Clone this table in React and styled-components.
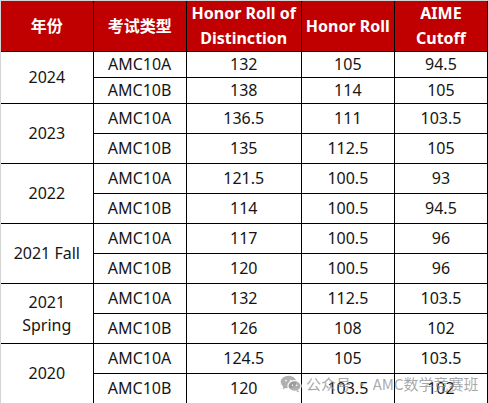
import React from "react";
import styled, { createGlobalStyle } from "styled-components";

const Global = createGlobalStyle`
  html, body { margin: 0; padding: 0; background: #fff; }
  body { font-family: "Noto Sans", "Open Sans", "Noto Sans CJK SC", sans-serif; }
`;

const Frame = styled.div`
  position: relative;
  width: 487px;
  border-left: 1px solid #d4d4d4;
  border-top: 1px solid #d4d4d4;
`;

const Table = styled.table`
  border-collapse: collapse;
  table-layout: fixed;
  width: 487px;
  font-size: 16px;
  color: #151515;
`;

const HeadRow = styled.tr`
  height: 49px;
  background: #c00000;
`;

const Th = styled.th`
  border: 1px solid #000;
  border-top: none;
  ${(p) => (p.$first ? "border-left: none;" : "")}
  color: #fff;
  font-weight: 700;
  line-height: 25px;
  padding: 0 2px;
  text-align: center;
  vertical-align: middle;
  font-family: "Noto Sans", "Open Sans", "Noto Sans CJK SC", sans-serif;
`;

const Row = styled.tr`
  height: ${(p) => p.$h}px;
`;

const Td = styled.td`
  border: 1px solid #000;
  ${(p) => (p.$first ? "border-left: none;" : "")}
  text-align: center;
  vertical-align: middle;
  padding: 0;
  line-height: 23px;
  font-weight: 400;
`;

const Watermark = styled.div`
  position: absolute;
  left: 279px;
  top: 372px;
  display: flex;
  align-items: center;
  gap: 4px;
  color: rgba(140, 140, 140, 0.75);
  font-size: 15px;
  font-family: "Noto Sans CJK SC", "Noto Sans", sans-serif;
  pointer-events: none;
  white-space: nowrap;
`;

const data = [
  { year: "2024", rows: [["AMC10A", "132", "105", "94.5"], ["AMC10B", "138", "114", "105"]], h: [26, 26] },
  { year: "2023", rows: [["AMC10A", "136.5", "111", "103.5"], ["AMC10B", "135", "112.5", "105"]], h: [30, 30] },
  { year: "2022", rows: [["AMC10A", "121.5", "100.5", "93"], ["AMC10B", "114", "100.5", "94.5"]], h: [30, 30] },
  { year: "2021 Fall", rows: [["AMC10A", "117", "100.5", "96"], ["AMC10B", "120", "100.5", "96"]], h: [30, 30] },
  { year: "2021 Spring", wrap: true, rows: [["AMC10A", "132", "112.5", "103.5"], ["AMC10B", "126", "108", "102"]], h: [30, 30] },
  { year: "2020", rows: [["AMC10A", "124.5", "105", "103.5"], ["AMC10B", "120", "103.5", "102"]], h: [30, 30] },
];

const WeChat = () => (
  <svg width="22" height="18" viewBox="0 0 22 18" fill="none">
    <ellipse cx="8.5" cy="7" rx="7.8" ry="6.3" fill="rgba(150,150,150,0.75)" />
    <path d="M3.5 11.5 L2.6 14.6 L6.2 12.6 Z" fill="rgba(150,150,150,0.75)" />
    <ellipse cx="14.5" cy="11" rx="6.6" ry="5.4" fill="rgba(150,150,150,0.75)" stroke="#fff" strokeWidth="1.2" />
    <path d="M18 15 L19.4 17.6 L15.8 16 Z" fill="rgba(150,150,150,0.75)" />
    <circle cx="6" cy="5.6" r="0.9" fill="#fff" />
    <circle cx="10.6" cy="5.6" r="0.9" fill="#fff" />
    <circle cx="12.5" cy="10.2" r="0.75" fill="#fff" />
    <circle cx="16.6" cy="10.2" r="0.75" fill="#fff" />
  </svg>
);

export default function App() {
  return (
    <>
      <Global />
      <Frame>
        <Table>
          <colgroup>
            <col style={{ width: 92 }} />
            <col style={{ width: 93 }} />
            <col style={{ width: 115 }} />
            <col style={{ width: 93 }} />
            <col style={{ width: 93 }} />
          </colgroup>
          <thead>
            <HeadRow>
              <Th $first>年份</Th>
              <Th>考试类型</Th>
              <Th>Honor Roll of<br />Distinction</Th>
              <Th>Honor Roll</Th>
              <Th>AIME<br />Cutoff</Th>
            </HeadRow>
          </thead>
          <tbody>
            {data.map((g) =>
              g.rows.map((r, i) => (
                <Row key={g.year + i} $h={g.h[i]}>
                  {i === 0 && (
                    <Td $first rowSpan={2}>
                      {g.wrap ? (
                        <>
                          2021
                          <br />
                          Spring
                        </>
                      ) : (
                        g.year
                      )}
                    </Td>
                  )}
                  {r.map((c, j) => (
                    <Td key={j}>{c}</Td>
                  ))}
                </Row>
              ))
            )}
          </tbody>
        </Table>
        <Watermark>
          <WeChat />
          <span>公众号 · AMC数学竞赛班</span>
        </Watermark>
      </Frame>
    </>
  );
}
